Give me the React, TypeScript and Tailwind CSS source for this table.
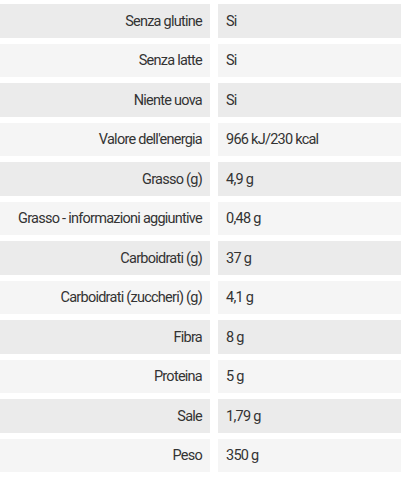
const rows: [string, string][] = [
  ['Senza glutine', 'Si'],
  ['Senza latte', 'Si'],
  ['Niente uova', 'Si'],
  ["Valore dell'energia", '966 kJ/230 kcal'],
  ['Grasso (g)', '4,9 g'],
  ['Grasso - informazioni aggiuntive', '0,48 g'],
  ['Carboidrati (g)', '37 g'],
  ['Carboidrati (zuccheri) (g)', '4,1 g'],
  ['Fibra', '8 g'],
  ['Proteina', '5 g'],
  ['Sale', '1,79 g'],
  ['Peso', '350 g'],
];

export default function App() {
  return (
    <div
      className="w-[401px] h-[478px] overflow-hidden bg-white pt-[4px] flex flex-col gap-[6px] text-[14.5px] tracking-[-0.75px] text-[#333]"
      style={{ fontFamily: 'Roboto, "Liberation Sans", sans-serif' }}
    >
      {rows.map(([label, value], i) => {
        const bg = i % 2 === 0 ? 'bg-[#ebebeb]' : 'bg-[#f5f5f5]';
        return (
          <div key={label} className="flex h-[33.5px] shrink-0 gap-[8px]">
            <div className={`w-[210px] shrink-0 flex items-center justify-end pr-[8px] pt-[2px] ${bg}`}>
              {label}
            </div>
            <div className={`flex-1 flex items-center pl-[8px] pt-[2px] ${bg}`}>{value}</div>
          </div>
        );
      })}
    </div>
  );
}
